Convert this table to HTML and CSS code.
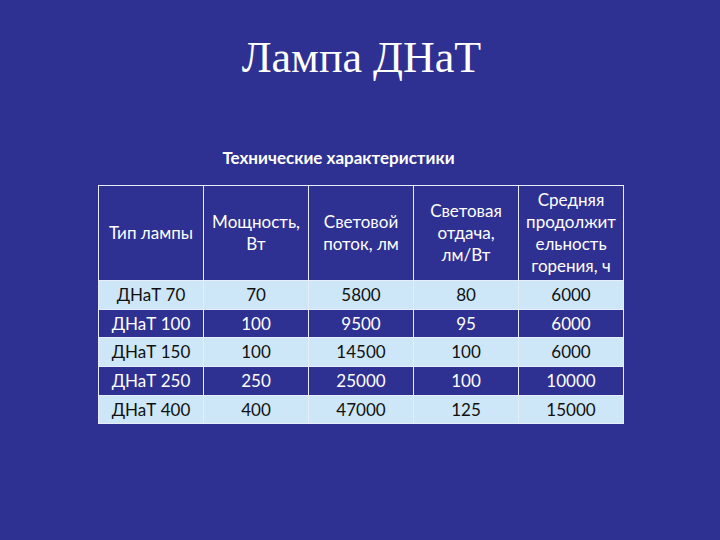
FILE: index.html
```
<!DOCTYPE html>
<html lang="ru">
<head>
<meta charset="utf-8">
<link rel="stylesheet" href="styles.css">
</head>
<body>
<div class="slide">
  <h1 class="title">Лампа ДНаТ</h1>
  <div class="subtitle">Технические характеристики</div>
  <table class="spec">
    <tr class="head">
      <td>Тип лампы</td>
      <td>Мощность,<br>Вт</td>
      <td>Световой<br>поток, лм</td>
      <td>Световая<br>отдача,<br>лм/Вт</td>
      <td>Средняя<br>продолжит<br>ельность<br>горения, ч</td>
    </tr>
    <tr class="light"><td>ДНаТ 70</td><td>70</td><td>5800</td><td>80</td><td>6000</td></tr>
    <tr class="dark"><td>ДНаТ 100</td><td>100</td><td>9500</td><td>95</td><td>6000</td></tr>
    <tr class="light"><td>ДНаТ 150</td><td>100</td><td>14500</td><td>100</td><td>6000</td></tr>
    <tr class="dark"><td>ДНаТ 250</td><td>250</td><td>25000</td><td>100</td><td>10000</td></tr>
    <tr class="light"><td>ДНаТ 400</td><td>400</td><td>47000</td><td>125</td><td>15000</td></tr>
  </table>
</div>
</body>
</html>
```
FILE: styles.css
```
html, body {
  margin: 0;
  padding: 0;
}
body {
  background: #2e3192;
  width: 720px;
  height: 540px;
  overflow: hidden;
}
.slide {
  display: flex;
  flex-direction: column;
  align-items: center;
}
.title {
  margin: 34px 0 0 3px;
  font-family: "Liberation Serif", serif;
  font-weight: normal;
  font-size: 44px;
  line-height: 48px;
  color: #ffffff;
}
.subtitle {
  margin-top: 66px;
  padding-right: 43px;
  font-family: Lato, "Liberation Sans", sans-serif;
  font-weight: bold;
  font-size: 17px;
  line-height: 20px;
  color: #ffffff;
}
.spec {
  margin-top: 17px;
  margin-left: 2px;
  border-collapse: collapse;
  font-family: Lato, "Liberation Sans", sans-serif;
  font-size: 17px;
  table-layout: fixed;
  width: 526px;
}
.spec td {
  width: 100px;
  border: 1px solid #e6ecf8;
  text-align: center;
  vertical-align: middle;
  padding: 0 2px;
  height: 27.7px;
  line-height: 20px;
}
.spec .head td {
  height: 94px;
  line-height: 22px;
  color: #ffffff;
  background: #2e3192;
}
.spec .light td {
  background: #cde6f8;
  color: #111111;
}
.spec .dark td {
  background: #2e3192;
  color: #ffffff;
}
```
